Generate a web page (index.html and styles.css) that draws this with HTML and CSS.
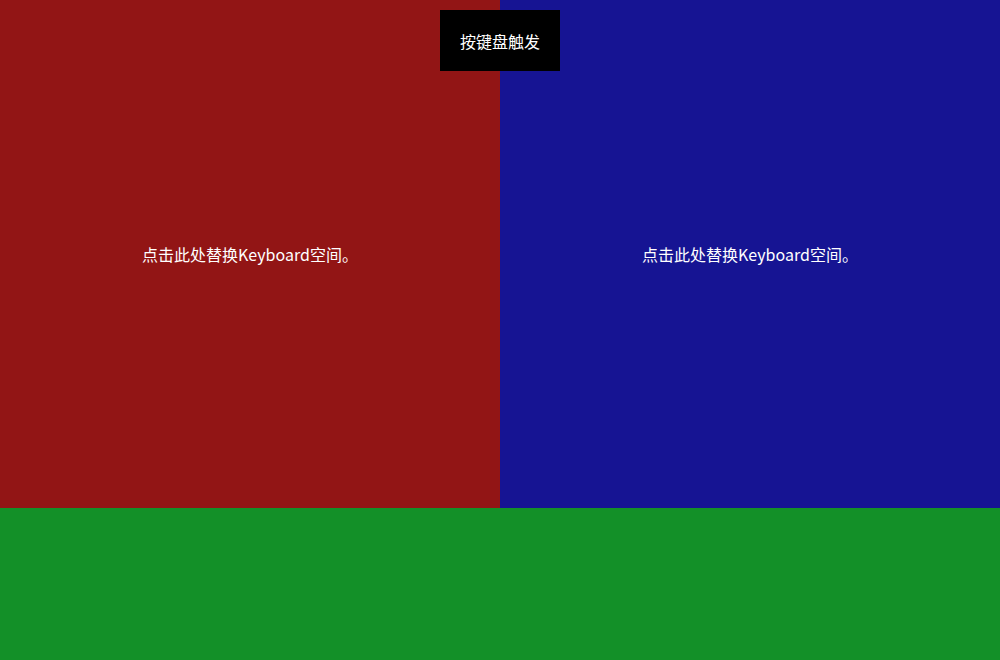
FILE: index.html
```html
<!DOCTYPE html>
<html lang="zh">
<head>
<meta charset="utf-8">
<link rel="stylesheet" href="styles.css">
</head>
<body>
<div class="app">
  <div class="top">
    <div class="pane pane-red">点击此处替换Keyboard空间。</div>
    <div class="pane pane-blue">点击此处替换Keyboard空间。</div>
  </div>
  <div class="bottom"></div>
  <button class="trigger">按键盘触发</button>
</div>
</body>
</html>
```
FILE: styles.css
```css
html, body {
  margin: 0;
  padding: 0;
  width: 1000px;
  height: 660px;
  overflow: hidden;
}
body {
  font-family: "Noto Sans CJK SC", "Liberation Sans", sans-serif;
  font-size: 16px;
  color: #fff;
}
.app {
  position: relative;
  display: flex;
  flex-direction: column;
  width: 1000px;
  height: 660px;
}
.top {
  display: flex;
  height: 508px;
}
.pane {
  flex: 1;
  display: flex;
  align-items: center;
  justify-content: center;
  padding-bottom: 0;
}
.pane-red { background: #921515; }
.pane-blue { background: #161493; }
.bottom {
  flex: 1;
  background: #139028;
}
.trigger {
  position: absolute;
  top: 10px;
  left: 440px;
  width: 120px;
  height: 61px;
  border: none;
  background: #000;
  color: #fff;
  font-family: inherit;
  font-size: 16px;
  padding: 0;
}
```
